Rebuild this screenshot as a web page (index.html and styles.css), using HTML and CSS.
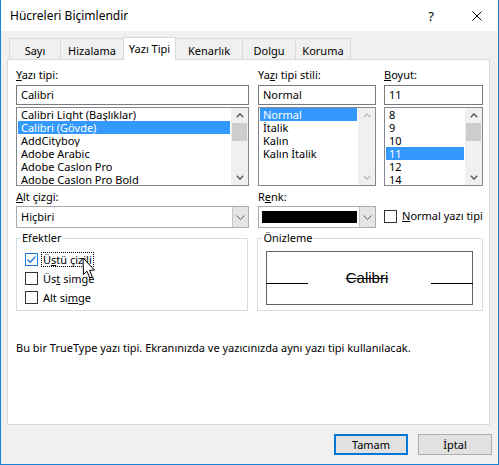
FILE: index.html
```html
<!DOCTYPE html>
<html lang="tr">
<head>
<meta charset="utf-8">
<title>Hücreleri Biçimlendir</title>
<link rel="stylesheet" href="styles.css">
</head>
<body>
<div class="window">
  <div class="titlebar">
    <span class="title">Hücreleri Biçimlendir</span>
    <span class="help">?</span>
    <span class="close"><svg width="10" height="10" viewBox="0 0 10 10"><path d="M0.5 0.5 L9.5 9.5 M9.5 0.5 L0.5 9.5" stroke="#000" stroke-width="1" fill="none"/></svg></span>
  </div>
  <div class="tabs">
    <div class="tab t1">Sayı</div>
    <div class="tab t2">Hizalama</div>
    <div class="tab t3 active">Yazı Tipi</div>
    <div class="tab t4">Kenarlık</div>
    <div class="tab t5">Dolgu</div>
    <div class="tab t6">Koruma</div>
  </div>
  <div class="panel">
    <div class="row1">
      <div class="col c1">
        <div class="lbl"><u>Y</u>azı tipi:</div>
        <div class="input">Calibri</div>
        <div class="list">
          <div class="items">
            <div class="item">Calibri Light (Başlıklar)</div>
            <div class="item sel">Calibri (Gövde)</div>
            <div class="item">AddCityboy</div>
            <div class="item">Adobe Arabic</div>
            <div class="item">Adobe Caslon Pro</div>
            <div class="item">Adobe Caslon Pro Bold</div>
          </div>
          <div class="sb">
            <div class="sbbtn"><svg class="chev" viewBox="0 0 8 5"><path d="M0.8 4.2 L4 1 L7.2 4.2"/></svg></div>
            <div class="track"><div class="thumb"></div></div>
            <div class="sbbtn"><svg class="chev" viewBox="0 0 8 5"><path d="M0.8 0.8 L4 4 L7.2 0.8"/></svg></div>
          </div>
        </div>
      </div>
      <div class="col c2">
        <div class="lbl">Ya<u>z</u>ı tipi stili:</div>
        <div class="input">Normal</div>
        <div class="list">
          <div class="items">
            <div class="item sel">Normal</div>
            <div class="item">İtalik</div>
            <div class="item">Kalın</div>
            <div class="item">Kalın İtalik</div>
          </div>
          <div class="sb disabled">
            <div class="sbbtn"><svg class="chev" viewBox="0 0 8 5"><path d="M0.8 4.2 L4 1 L7.2 4.2"/></svg></div>
            <div class="track"></div>
            <div class="sbbtn"><svg class="chev" viewBox="0 0 8 5"><path d="M0.8 0.8 L4 4 L7.2 0.8"/></svg></div>
          </div>
        </div>
      </div>
      <div class="col c3">
        <div class="lbl"><u>B</u>oyut:</div>
        <div class="input">11</div>
        <div class="list">
          <div class="items">
            <div class="item">8</div>
            <div class="item">9</div>
            <div class="item">10</div>
            <div class="item sel">11</div>
            <div class="item">12</div>
            <div class="item">14</div>
          </div>
          <div class="sb">
            <div class="sbbtn"><svg class="chev" viewBox="0 0 8 5"><path d="M0.8 4.2 L4 1 L7.2 4.2"/></svg></div>
            <div class="track"><div class="thumb"></div></div>
            <div class="sbbtn"><svg class="chev" viewBox="0 0 8 5"><path d="M0.8 0.8 L4 4 L7.2 0.8"/></svg></div>
          </div>
        </div>
      </div>
    </div>

    <div class="row2">
      <div class="col c1">
        <div class="lbl"><u>A</u>lt çizgi:</div>
        <div class="combo">
          <span class="combotext">Hiçbiri</span>
          <span class="dd"><svg class="dchev" viewBox="0 0 9 5"><path d="M0.5 0.5 L4.5 4.5 L8.5 0.5"/></svg></span>
        </div>
      </div>
      <div class="col c2">
        <div class="lbl">R<u>e</u>nk:</div>
        <div class="combo">
          <span class="swatch"></span>
          <span class="dd"><svg class="dchev" viewBox="0 0 9 5"><path d="M0.5 0.5 L4.5 4.5 L8.5 0.5"/></svg></span>
        </div>
      </div>
      <div class="col c3 normalchk">
        <span class="box"></span>
        <span class="chklbl"><u>N</u>ormal yazı tipi</span>
      </div>
    </div>

    <div class="row3">
      <div class="group g1">
        <span class="legend">Efektler</span>
        <div class="cbrow">
          <span class="box checked"><svg width="11" height="11" viewBox="0 0 11 11"><path d="M1.5 5.5 L4.2 8.2 L9.5 2.5" stroke="#1e7ad6" stroke-width="1.3" fill="none"/></svg></span>
          <span class="cblbl focus">Ü<u>s</u>tü çizili</span>
          <svg class="cursor" width="14" height="23" viewBox="0 0 14 23"><path d="M1 1 L1.5 17.5 L5 14.2 L7.8 20.8 L10.3 19.8 L7.6 13.4 L12.4 13 Z" fill="#fff" stroke="#000" stroke-width="1" stroke-linejoin="round"/></svg>
        </div>
        <div class="cbrow">
          <span class="box"></span>
          <span class="cblbl">Üs<u>t</u> simge</span>
        </div>
        <div class="cbrow">
          <span class="box"></span>
          <span class="cblbl">Alt si<u>m</u>ge</span>
        </div>
      </div>
      <div class="group g2">
        <span class="legend">Önizleme</span>
        <div class="preview">
          <span class="pline"></span>
          <span class="ptext">Calibri</span>
          <span class="pline"></span>
        </div>
      </div>
    </div>

    <div class="desc">Bu bir TrueType yazı tipi. Ekranınızda ve yazıcınızda aynı yazı tipi kullanılacak.</div>
  </div>
  <div class="buttons">
    <div class="btn default">Tamam</div>
    <div class="btn">İptal</div>
  </div>
</div>
</body>
</html>
```

FILE: styles.css
```css
* { box-sizing: border-box; }
html, body { margin: 0; padding: 0; }
body {
  width: 499px;
  height: 465px;
  overflow: hidden;
  background: #fff;
  font-family: "Segoe UI", "Noto Sans", sans-serif;
  font-size: 11px;
  color: #000;
}
u { text-decoration: underline; text-underline-offset: 1px; text-decoration-thickness: 1px; }

.window {
  width: 499px;
  height: 465px;
  border: 1px solid #1883d7;
  border-top: none;
  background: #f0f0f0;
  display: flex;
  flex-direction: column;
}

.titlebar {
  flex: none;
  height: 31px;
  background: #fff;
  display: flex;
  align-items: center;
  padding-left: 9px;
}
.title { flex: 1; line-height: 16px; font-size: 12px; }
.help { width: 20px; text-align: center; font-size: 13px; line-height: 16px; }
.close { width: 42px; margin-left: 15px; display: flex; justify-content: center; align-items: center; }

.tabs {
  flex: none;
  display: flex;
  align-items: flex-end;
  height: 22px;
  margin-top: 6px;
  padding-left: 8px;
  position: relative;
  z-index: 1;
}
.tab {
  height: 21px;
  border: 1px solid #d9d9d9;
  border-bottom: none;
  margin-right: -1px;
  background: #f0f0f0;
  text-align: center;
  line-height: 14px;
  padding-top: 5px;
  white-space: nowrap;
}
.tab.active {
  height: 23px;
  margin-bottom: -1px;
  background: #fff;
  padding-top: 4px;
}
.t1 { width: 52px; }
.t2 { width: 64px; }
.t3 { width: 53px; }
.t4 { width: 68px; }
.t5 { width: 54px; }
.t6 { width: 56px; }

.panel {
  flex: none;
  margin-left: 6px;
  width: 483px;
  height: 366px;
  border: 1px solid #d9d9d9;
  background: #fff;
  padding: 8px 6px 0 8px;
}

.row1, .row2, .row3 { display: flex; }
.c1 { width: 233px; }
.c2 { width: 118px; margin-left: 9px; }
.c3 { width: 99px; margin-left: 8px; }

.lbl { height: 14px; line-height: 14px; white-space: nowrap; }

.input {
  margin-top: 3px;
  height: 20px;
  border: 1px solid #7a7a7a;
  padding-left: 4px;
  line-height: 17px;
}

.list {
  margin-top: 2px;
  height: 79px;
  border: 1px solid #828790;
  display: flex;
}
.items { flex: 1; padding: 0 1px 0 1px; }
.item {
  height: 13px;
  line-height: 13px;
  padding-left: 3px;
  white-space: nowrap;
  overflow: hidden;
}
.item.sel { background: #3399ff; color: #fff; }

.sb {
  width: 17px;
  background: #f0f0f0;
  display: flex;
  flex-direction: column;
}
.sbbtn { height: 15px; display: flex; align-items: center; justify-content: center; }
.track { flex: 1; }
.thumb { height: 18px; margin: 0 1px; background: #cdcdcd; }
.chev { width: 8px; height: 5px; }
.chev path { stroke: #606060; stroke-width: 1.6; fill: none; }
.sb.disabled .chev path { stroke: #bfbfbf; }

.row2 { margin-top: 4px; }
.combo {
  margin-top: 2px;
  height: 22px;
  border: 1px solid #acacac;
  background: #fff;
  display: flex;
  align-items: stretch;
}
.combotext { flex: 1; padding-left: 4px; line-height: 20px; }
.swatch { flex: 1; margin: 4px 2px 4px 3px; background: #000; }
.dd {
  width: 16px;
  background: #e5e5e5;
  border-left: 1px solid #c4c4c4;
  display: flex;
  align-items: center;
  justify-content: center;
}
.dchev { width: 9px; height: 5px; }
.dchev path { stroke: #606060; stroke-width: 1; fill: none; }

.normalchk { display: flex; align-items: center; padding-top: 16px; height: 36px; }
.box {
  width: 13px;
  height: 13px;
  border: 1px solid #333;
  background: #fff;
  flex: none;
  display: flex;
  align-items: center;
  justify-content: center;
}
.box.checked { border-color: #1e7ad6; }
.chklbl { margin-left: 5px; line-height: 14px; white-space: nowrap; }

.row3 { margin-top: 10px; }
.group {
  height: 73px;
  border: 1px solid #dcdcdc;
}
.g1 { width: 233px; padding-left: 8px; }
.g2 { width: 226px; margin-left: 9px; padding-left: 8px; }
.legend {
  display: block;
  width: max-content;
  height: 14px;
  line-height: 14px;
  margin-top: -8px;
  margin-left: -4px;
  padding: 0 1px;
  background: #fff;
}
.cbrow { height: 19px; display: flex; align-items: center; position: relative; }
.legend + .cbrow { margin-top: 5px; }
.cblbl {
  margin-left: 3px;
  padding: 0 1px;
  border: 1px solid transparent;
  line-height: 13px;
}
.cblbl.focus { border: 1px dotted #000; }
.cursor { position: absolute; left: 57px; top: 7px; }

.preview {
  margin-top: 6px;
  width: 207px;
  height: 54px;
  border: 1px solid #646464;
  display: flex;
  align-items: flex-start;
}
.pline { width: 42px; height: 1px; background: #000; margin-top: 31px; flex: none; }
.pline:first-child { margin-left: -1px; }
.pline:last-child { margin-right: -1px; }
.ptext {
  flex: 1;
  text-align: center;
  font-family: "Liberation Sans", Arial, sans-serif;
  font-size: 15px;
  line-height: 18px;
  margin-top: 17px;
  padding-right: 6px;
  text-decoration: line-through;
  text-decoration-thickness: 1px;
}

.desc { margin-top: 30px; line-height: 14px; }

.buttons {
  flex: none;
  display: flex;
  justify-content: flex-end;
  margin-top: 9px;
  padding-right: 6px;
}
.btn {
  width: 74px;
  height: 21px;
  background: #e1e1e1;
  border: 1px solid #adadad;
  text-align: center;
  line-height: 19px;
  margin-left: 10px;
}
.btn.default { border: 2px solid #0078d7; line-height: 17px; }
```
